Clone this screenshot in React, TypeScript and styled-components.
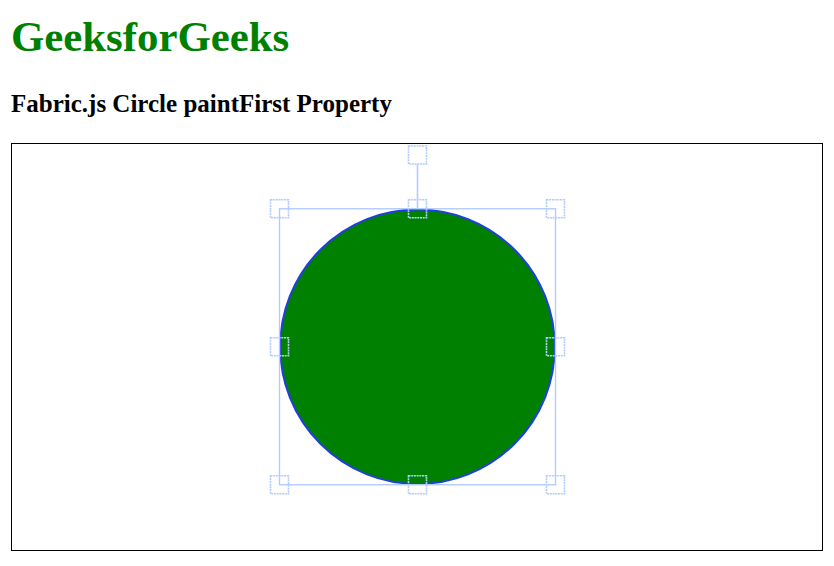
import styled, { createGlobalStyle } from "styled-components";

const GlobalStyle = createGlobalStyle`
  html, body {
    margin: 0;
    padding: 0;
    background: #ffffff;
  }
`;

const Page = styled.div`
  padding: 12px 11px 0 11px;
  font-family: "Liberation Serif", "Times New Roman", serif;
`;

const Title = styled.h1`
  margin: 0;
  font-size: 42.8px;
  line-height: 49px;
  font-weight: bold;
  color: #008000;
`;

const Subtitle = styled.h3`
  margin: 28px 0 0 0;
  font-size: 25px;
  line-height: 29px;
  font-weight: bold;
  color: #000000;
`;

const CanvasFrame = styled.div`
  margin-top: 25px;
  width: 810px;
  height: 406px;
  border: 1px solid #000000;
  background: #ffffff;
`;

const Drawing = styled.svg`
  display: block;
`;

const CX = 405.5;
const CY = 202.75;
const HALF = 138;
const HANDLE = 18;
const ROT_Y = 11;

const handles = [
  [CX - HALF, CY - HALF],
  [CX, CY - HALF],
  [CX + HALF, CY - HALF],
  [CX - HALF, CY],
  [CX + HALF, CY],
  [CX - HALF, CY + HALF],
  [CX, CY + HALF],
  [CX + HALF, CY + HALF],
  [CX, ROT_Y],
];

const control = "#b3ccff";

const App = () => {
  return (
    <>
      <GlobalStyle />
      <Page>
        <Title>GeeksforGeeks</Title>
        <Subtitle>Fabric.js Circle paintFirst Property</Subtitle>
        <CanvasFrame>
          <Drawing width="810" height="406" viewBox="0 0 810 406">
            <circle
              cx={CX}
              cy={CY}
              r={136.3}
              fill="#008000"
              stroke="#1f3fe0"
              strokeWidth={4}
              style={{ paintOrder: "stroke" }}
            />
            <rect
              x={CX - HALF}
              y={CY - HALF}
              width={HALF * 2}
              height={HALF * 2}
              fill="none"
              stroke={control}
              strokeWidth={1.4}
            />
            <line
              x1={CX}
              y1={ROT_Y + HANDLE / 2}
              x2={CX}
              y2={CY - HALF}
              stroke={control}
              strokeWidth={1.6}
            />
            {handles.map(([x, y], i) => (
              <rect
                key={i}
                x={x - HANDLE / 2}
                y={y - HANDLE / 2}
                width={HANDLE}
                height={HANDLE}
                fill="none"
                stroke={control}
                strokeWidth={1.6}
                strokeDasharray="2 0.7"
              />
            ))}
          </Drawing>
        </CanvasFrame>
      </Page>
    </>
  );
};

export default App;
